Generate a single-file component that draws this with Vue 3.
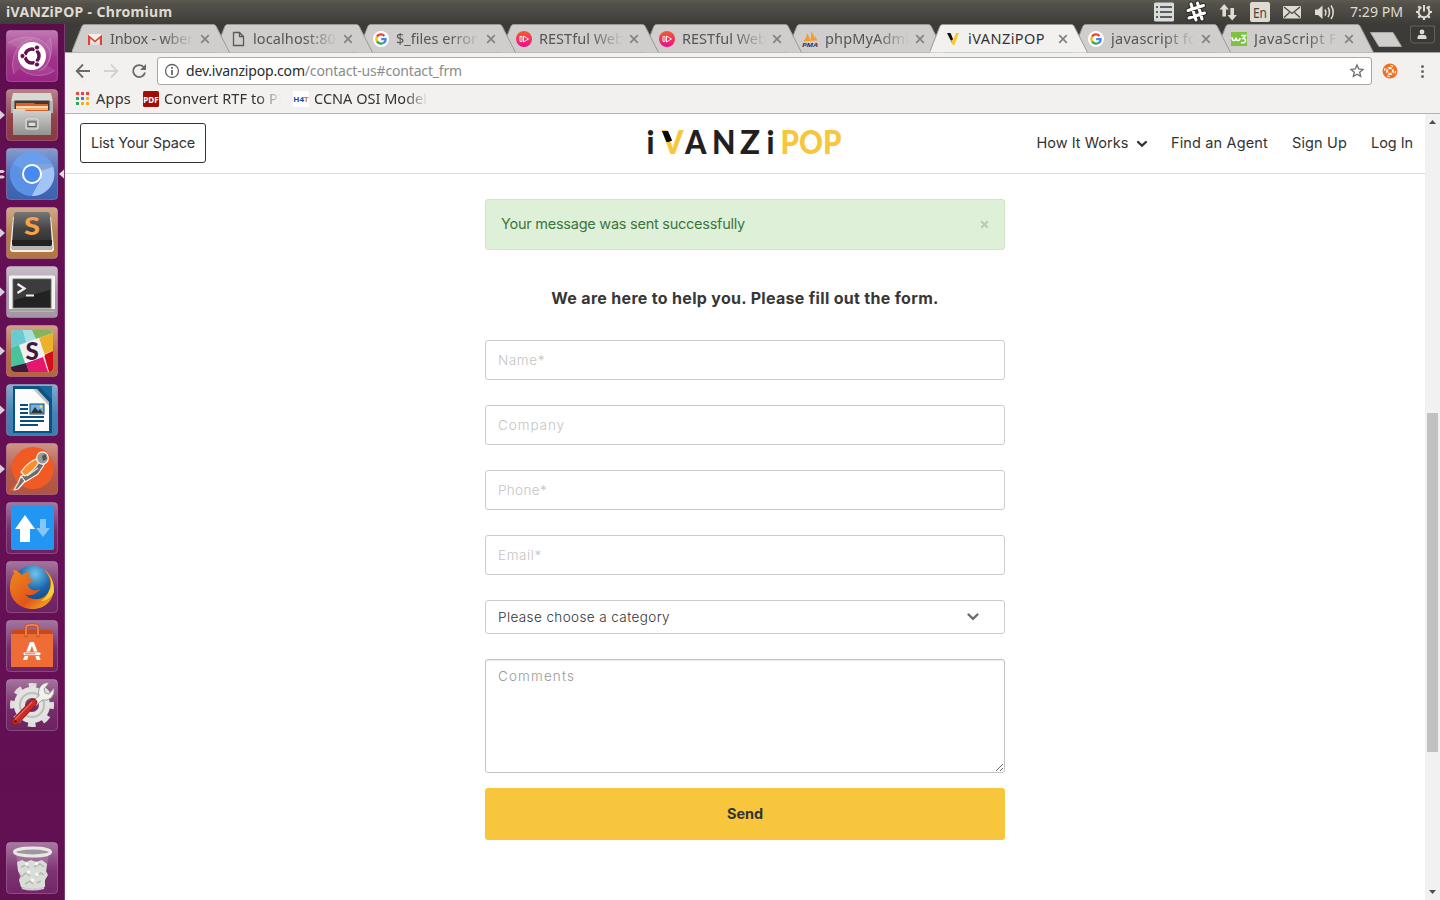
<script setup>
const tabs = [
  { icon: 'gmail', title: 'Inbox - wber', w: 83 },
  { icon: 'doc', title: 'localhost:80', w: 83 },
  { icon: 'google', title: '$_files error', w: 81 },
  { icon: 'play', title: 'RESTful Web', w: 85 },
  { icon: 'play', title: 'RESTful Web', w: 85 },
  { icon: 'pma', title: 'phpMyAdmi', w: 84 },
  { icon: 'v', title: 'iVANZiPOP', w: 77, active: true },
  { icon: 'google', title: 'javascript fo', w: 86 },
  { icon: 'w3', title: 'JavaScript F', w: 83 }
]
const apps = ['ubuntu', 'files', 'chromium', 'sublime', 'terminal', 'slack', 'writer', 'postman', 'transfer', 'firefox', 'software', 'settings', 'trash']
const running = ['files', 'sublime', 'terminal', 'slack', 'writer', 'postman']
const fields = [
  { label: 'Name*', w: 47 },
  { label: 'Company', w: 67 },
  { label: 'Phone*', w: 49 },
  { label: 'Email*', w: 44 }
]
const appGrid = ['#e8453c', '#e8453c', '#e8453c', '#34a05a', '#3d7de8', '#f6b01e', '#34a05a', '#f6b01e', '#f6b01e']

// Spreads a text run over a given width by adjusting its letter spacing.
const ctx = document.createElement('canvas').getContext('2d')
const vFit = {
  mounted(el, { value }) {
    const s = getComputedStyle(el)
    const text = (el.placeholder || el.textContent).trim()
    ctx.font = `${s.fontWeight} ${s.fontSize} ${s.fontFamily}`
    const gap = (value - ctx.measureText(text).width) / text.length
    el.style.letterSpacing = `${gap.toFixed(3)}px`
  }
}
</script>

<template>
  <div class="desktop">
    <header class="panel">
      <span v-fit="166.5" class="window-title">iVANZiPOP - Chromium</span>
      <svg class="tray" width="290" height="24" viewBox="1150 0 290 24">
        <g fill="#dfdbd2">
          <rect x="1154" y="2.500" width="20" height="19" rx="1.500" fill="#d9dcdc" />
          <g fill="#5b5f60"><rect x="1156" y="6" width="2" height="2" /><rect x="1160" y="6" width="12" height="2" /><rect x="1156" y="11" width="2" height="2" /><rect x="1160" y="11" width="12" height="2" /><rect x="1156" y="16" width="2" height="2" /><rect x="1160" y="16" width="12" height="2" /></g>
          <path d="M1191 4l5 16M1197.500 3l4.500 16M1188 10.500l15.500-5M1189 18l15.500-5" stroke="#2a2926" stroke-width="5" stroke-linecap="round" />
          <path d="M1191 4l5 16M1197.500 3l4.500 16M1188 10.500l15.500-5M1189 18l15.500-5" stroke="#fff" stroke-width="3" stroke-linecap="round" />
          <path d="M1219.500 9.500l4.700-5.500 4.700 5.500h-2.900v7h-3.600v-7zM1227.500 15l4.700 5.500 4.700-5.500h-2.900V8h-3.600v7z" />
          <rect x="1250" y="2" width="20" height="20" rx="2" />
          <rect x="1283" y="6" width="18" height="12.500" rx="1" />
          <path d="M1284 7l8 6.500 8-6.500M1284 17.500l5.500-5M1300 17.500l-5.500-5" fill="none" stroke="#4a4843" stroke-width="1.300" />
          <path d="M1315 9.500h3l4.500-4v13.500l-4.500-4h-3z" />
          <path d="M1325 9.500q1.800 3 0 6M1328 7.500q3 4.800 0 9.600M1331 5.500q4.500 6.800 0 13.500" fill="none" stroke="#dfdbd2" stroke-width="1.500" />
        </g>
        <text x="1253" y="17.500" class="lang" textLength="14" lengthAdjust="spacingAndGlyphs">En</text>
        <text x="1350" y="17" class="clock" textLength="53" lengthAdjust="spacingAndGlyphs">7:29 PM</text>
        <g stroke="#dfdbd2" fill="none" transform="translate(1424 12)">
          <path d="M-2.600-4.800A5.400 5.400 0 1 0 2.600-4.800" stroke-width="2" />
          <path d="M0-7v6.500" stroke-width="2" />
          <path d="M5.500 0H8M-5.500 0H-8M0 5.500V8M3.900 3.900l1.800 1.800M-3.900 3.900l-1.800 1.800M4.300-4.300l1.400-1.400M-4.300-4.300l-1.400-1.400" stroke-width="2.200" />
        </g>
      </svg>
    </header>

    <div class="workspace">
      <aside class="launcher">
        <div v-for="app in apps" :key="app" class="slot" :class="app">
          <svg class="app" width="65" height="52" viewBox="-6 0 65 52">
            <defs>
              <linearGradient id="sheen" x2="0" y2="1"><stop offset="0" stop-color="#fff" stop-opacity=".38" /><stop offset=".55" stop-color="#fff" stop-opacity=".06" /><stop offset="1" stop-color="#fff" stop-opacity="0" /></linearGradient>
              <linearGradient id="metal" x2="0" y2="1"><stop offset="0" stop-color="#d3d3d1" /><stop offset="1" stop-color="#92928f" /></linearGradient>
              <linearGradient id="dark" x2="0" y2="1"><stop offset="0" stop-color="#777" /><stop offset=".5" stop-color="#444" /><stop offset="1" stop-color="#2b2b2b" /></linearGradient>
              <linearGradient id="fox" x1="0" y1="0" x2="1" y2="1"><stop offset="0" stop-color="#f08a1c" /><stop offset=".6" stop-color="#e2551a" /><stop offset="1" stop-color="#f7c51e" /></linearGradient>
              <radialGradient id="globe" cx=".55" cy=".2" r=".8"><stop offset="0" stop-color="#6fc4ec" /><stop offset=".5" stop-color="#1b66ab" /><stop offset="1" stop-color="#123a74" /></radialGradient>
              <clipPath id="slackclip"><rect x="5" y="5" width="42" height="42" rx="4" /></clipPath>
            </defs>
            <path v-if="running.includes(app)" d="M-6 21.500l5 4.500-5 4.500z" fill="#d9cdd7" />
            <template v-if="app === 'chromium'">
              <path d="M-6 22h3l2 1.500-2 1.500h-3zM-6 27.500h3l2 1.500-2 1.500h-3z" fill="#d9cdd7" />
              <path d="M58 21.500l-5 4.500 5 4.500z" fill="#e4dce3" />
            </template>
            <rect class="tile" x=".5" y=".5" width="51" height="51" rx="3.500" />
            <rect x=".5" y=".5" width="51" height="51" rx="3.500" fill="url(#sheen)" />

            <g v-if="app === 'ubuntu'">
              <g fill="none" stroke="#dba9d0" stroke-width="1" opacity=".4">
                <path d="M2 13C18 3 37 7 42 17s1 19-9 24M8 44C3 27 12 11 26 9M49 40C39 48 22 47 14 38M44 8C48 21 43 35 36 40" />
              </g>
              <path d="M2 13C18 3 37 7 42 17L26 26zM8 44C3 27 12 15 20 12l6 14zM49 40C39 48 22 47 14 38l12-12zM44 8C48 21 43 35 36 40L26 26z" fill="#fff" opacity=".1" />
              <circle cx="26" cy="26" r="14" fill="#fff" />
              <circle cx="26" cy="26" r="7" fill="none" stroke="#621250" stroke-width="3.500" />
              <path d="M26 26H16M26 26l5.500-9M26 26l5.500 9" stroke="#fff" stroke-width="1.500" />
              <circle cx="26" cy="26" r="5" fill="#fff" />
              <g fill="#621250" stroke="#fff" stroke-width="1"><circle cx="16.500" cy="26" r="2.600" /><circle cx="31" cy="17.500" r="2.600" /><circle cx="31" cy="34.500" r="2.600" /></g>
            </g>
            <g v-else-if="app === 'files'">
              <path d="M7 4h38l2 9v6H5v-6z" fill="#d8d8d6" />
              <path d="M5 12h42v12H5z" fill="#b5b5b3" />
              <path d="M8.500 11.500h35v10h-35z" fill="#4b3528" />
              <path d="M10 14h18l1 1h13v7H10z" fill="#d6642a" /><path d="M10 17h32v4H10z" fill="#f5b06c" /><path d="M10 17.500h32v1H10z" fill="#fff" />
              <path d="M7 20h11l2 2h25v24H7z" fill="url(#metal)" />
              <rect x="20" y="30" width="12" height="10" rx="2" fill="#aaa" stroke="#e1e1e1" stroke-width="1.200" /><rect x="22" y="33" width="8" height="4.500" fill="#ddd" stroke="#555" />
            </g>
            <g v-else-if="app === 'chromium'">
              <circle cx="26" cy="26" r="22" fill="#5d92e5" />
              <path d="M26 26L6.500 16A22 22 0 0 1 46 16z" fill="#6a9eea" /><path d="M26 16h20a22 22 0 0 1-20.500 32L35 31z" fill="#a2c3f6" />
              <path d="M7 15l10 17 8 3 8-1-7.500 14A22 22 0 0 1 7 15z" fill="#5b91e4" /><path d="M26 16h20l1 3-13 4z" fill="#315b9e" opacity=".3" />
              <circle cx="26" cy="26" r="10" fill="#fff" /><circle cx="26" cy="26" r="8" fill="#478af0" />
            </g>
            <g v-else-if="app === 'sublime'">
              <path d="M7 10L4 42q0 3 3 3h38q3 0 3-3L45 10z" fill="#f1f1ef" /><path d="M5 39h42l-1 4H6z" fill="#b9b6b0" />
              <path d="M11 5h30q3 0 3 3l2 29q0 2-2 2H8q-2 0-2-2L8 8q0-3 3-3z" fill="url(#dark)" />
              <path d="M6 33h40v4q0 2-2 2H8q-2 0-2-2z" fill="#222" />
              <text x="18" y="28" class="sub-s" textLength="16" lengthAdjust="spacingAndGlyphs">S</text>
            </g>
            <g v-else-if="app === 'terminal'">
              <rect x="3" y="9.500" width="46" height="36" rx="1.500" fill="#f3f3f1" /><path d="M3 43h46v2.500H3z" fill="#a3a09f" />
              <rect x="7" y="13" width="38" height="29" fill="#222" stroke="#777" /><path d="M8 14h36v10L8 34z" fill="#fff" opacity=".12" />
              <path d="M11.500 18l7 4.500-7 4.500" fill="none" stroke="#eee" stroke-width="2.300" /><path d="M20 29.500h8" stroke="#eee" stroke-width="2" />
            </g>
            <g v-else-if="app === 'slack'" clip-path="url(#slackclip)">
              <path d="M5 5h42v42H5z" fill="#f3eff2" />
              <path d="M5 5h12l4 13-16 5z" fill="#69cbd0" /><path d="M17 5h13l2 8-12 5z" fill="#a8e1e3" /><path d="M26 5h21v3l-17 6z" fill="#84b55c" />
              <path d="M33 13l14-5v18l-9 3z" fill="#ecb12d" /><path d="M5 23l8-3 6 18-14 5z" fill="#49c39c" /><path d="M20 38l17-6 5 15H23z" fill="#e6176f" />
              <path d="M38 30l9-4v21h-4z" fill="#d60d1c" /><path d="M5 42l15-4 3 9H5z" fill="#40193f" />
              <path d="M13 20l20-7 6 18-19 7z" fill="#f3eff2" />
              <text x="26" y="34.500" text-anchor="middle" class="slack-s">S</text>
            </g>
            <g v-else-if="app === 'writer'">
              <path d="M7 2h28l11 12v35H7z" fill="#075383" /><path d="M9 5h20l14 14v28H9z" fill="#fcfcfa" /><path d="M27 5h4l12 13v4z" fill="#c2c2c2" /><path d="M33 2h13v14z" fill="#18689a" />
              <path d="M14 21h8M14 25h8M14 29h8M14 33h24M14 37h24M14 41h18" stroke="#0b4d7c" stroke-width="2" />
              <rect x="24" y="20" width="14" height="10" fill="#6db4e8" stroke="#16496c" /><path d="M25 29l4-6 3 4 2-2 3 4z" fill="#333" /><circle cx="35" cy="22.500" r="1.500" fill="#f4d253" />
            </g>
            <g v-else-if="app === 'postman'">
              <circle cx="27" cy="25" r="21" fill="#f15a24" /><path d="M3 48l10-11 5 6z" fill="#f15a24" />
              <g stroke="#f7f5f2" stroke-width="1.200" stroke-linejoin="round">
                <path d="M33 17l5 5-6 9-13 8-4-5z" fill="#6e6a68" />
                <path d="M15 29q6-9 15-13l3 3q-5 9-14 14z" fill="#f7902b" />
                <path d="M15 33l4 5-7 8-4 1 4-7z" fill="#77706d" />
                <ellipse cx="36.500" cy="15" rx="5.800" ry="6.200" fill="#9b9895" />
              </g>
              <path d="M36 13l3.500-2 1.500 5-4 2z" fill="#54504e" /><path d="M21 33l11-8" stroke="#e9e6e3" stroke-width="1.200" />
            </g>
            <g v-else-if="app === 'transfer'">
              <rect x="5" y="4" width="43" height="44" rx="2" fill="#2196f3" /><path d="M9 27l10-14 10 14h-5v13H14V27z" fill="#fff" /><path d="M34 17h6v9h4l-7 9-7-9h4z" fill="#86c5f8" />
            </g>
            <g v-else-if="app === 'firefox'">
              <circle cx="27" cy="25" r="20.500" fill="url(#globe)" />
              <path d="M7 9c4 0 6 2 9 5 2-2 5-3 8-3-1 2-2 4-1 6 2 1 4 1 4 2 0 2-5 3-5 5 1 5 7 7 12 4-3 5-10 8-15 5 4 6 14 7 20 2 5-4 6-10 5-15-1-6-5-10-7-12 7 4 11 11 11 19 0 12-9 21-21 21C13 48 4 38 4 27 4 20 6 15 8 13z" fill="url(#fox)" />
              <path d="M38 8c7 7 9 15 5 22-2 5-5 8-8 10 5 0 10-3 13-9 0-10-3-17-10-23z" fill="#fbdc37" opacity=".85" />
            </g>
            <g v-else-if="app === 'software'">
              <path d="M5 16l2-6h38l2 6z" fill="#c84b17" /><rect x="5" y="14" width="42" height="33" fill="#ee6c35" />
              <path d="M20 17V8q0-3 3-3h6q3 0 3 3v9" fill="none" stroke="#c94c1b" stroke-width="3" /><path d="M20 16V8q0-3 3-3h6q3 0 3 3v8" fill="none" stroke="#f48a59" stroke-width="1.500" />
              <text x="26" y="40" text-anchor="middle" class="soft-a">A</text>
              <rect x="17" y="32" width="18" height="3.500" rx="1.700" fill="#fff" stroke="#e86933" stroke-width=".8" /><path d="M19 33.800h10" stroke="#e86933" />
            </g>
            <g v-else-if="app === 'settings'">
              <circle cx="26" cy="26" r="19" fill="none" stroke="#dededc" stroke-width="6" stroke-dasharray="7.500 7.423" stroke-dashoffset="3.750" />
              <circle cx="26" cy="26" r="12.500" fill="none" stroke="#e3e3e1" stroke-width="11" /><circle cx="26" cy="26" r="12" fill="none" stroke="#bdbdbb" stroke-width="2" />
              <path d="M26 22l7-5q-2-8 4-12 3-2 6-1l-5 6 1 4 4 1 5-6q1 6-3 10-4 3-9 2l-6 6z" fill="#f0f0ee" stroke="#8c8c8a" stroke-width=".8" />
              <path d="M9.500 42.500L27.500 23.500" stroke="#8e1714" stroke-width="7.500" stroke-linecap="round" /><path d="M9.500 42.500L27.500 23.500" stroke="#c92c28" stroke-width="5.800" stroke-linecap="round" /><path d="M9 40.500L26 23" stroke="#e8635c" stroke-width="1.300" /><circle cx="9.500" cy="42.500" r="1.500" fill="#6e1512" />
            </g>
            <g v-else>
              <path d="M10 11h33l-5 35q-12 4-23 0z" fill="#b495ac" opacity=".45" />
              <path d="M11 20l5-2 4 2 5-2 5 2 6-2 5 4-1 7 2 4-3 5v7q-12 4-24 0l-2-7 2-4-3-5z" fill="#d9dcd7" />
              <path d="M15 25l5-2 3 3M28 25l6-3 4 3M15 35l5-4 4 3M30 35l5-4 3 2M19 42l5-3 3 3M31 41l4-2" fill="none" stroke="#b3b9b1" stroke-width="1.500" /><path d="M19 21l3 2M30 31l2 3M24 29l-3 2M29 21l3 1M25 37l3 2" stroke="#f6f7f5" stroke-width="3" />
              <ellipse cx="26.500" cy="10" rx="18" ry="4" fill="#a096a0" stroke="#e8e9e6" stroke-width="3" /><path d="M16 46q10 3 22 0" stroke="#d0cbd0" fill="none" stroke-width="2" />
            </g>
            <rect x=".5" y=".5" width="51" height="51" rx="3.500" fill="none" stroke="#fff" stroke-opacity=".22" />
          </svg>
        </div>
      </aside>

      <section class="browser">
        <div class="tabstrip">
          <div v-for="(tab, i) in tabs" :key="i" class="tab" :class="{ active: tab.active }" :style="{ zIndex: tab.active ? 20 : 10 - i }">
            <svg class="tab-shape" width="158" height="29" viewBox="0 0 158 29">
              <path d="M-.5 28.500L10 2Q11 .5 12.500.5H141.500Q143 .5 144 2L157.500 28.500" />
            </svg>
            <svg class="favicon" width="16" height="16" viewBox="0 0 16 16">
              <g v-if="tab.icon === 'gmail'"><path d="M1 3h14v11H1z" fill="#f2f0ee" /><path d="M3 14l5-6 5 6z" fill="#dedede" /><path d="M1 14V3.500l7 6 7-6V14h-2.200V7.500L8 11.500l-4.800-4V14z" fill="#d9453a" /></g>
              <path v-else-if="tab.icon === 'doc'" d="M3.500 1.500h6l4 4v9h-10zM9.500 1.500v4h4" fill="none" stroke="#5a5a5a" stroke-width="1.300" />
              <g v-else-if="tab.icon === 'google'" fill="none" stroke-width="2.300"><circle cx="8" cy="8" r="8" fill="#fff" /><path d="M4 5.600A4.600 4.600 0 0 1 11.400 4.900" stroke="#ea4335" /><path d="M4 5.600a4.600 4.600 0 0 0 0 4.800" stroke="#fbbc05" /><path d="M4 10.400a4.600 4.600 0 0 0 7 1.100" stroke="#34a853" /><path d="M11 11.800A4.600 4.600 0 0 0 12.600 8.200H8.200" stroke="#4285f4" /></g>
              <g v-else-if="tab.icon === 'play'"><circle cx="8" cy="8" r="8" fill="url(#pinkplay)" /><path d="M4 5.500h2v5H4zM7.500 5l5 3-5 3z" fill="none" stroke="#fff" stroke-width=".9" /><defs><linearGradient id="pinkplay" x2="0" y2="1"><stop stop-color="#f45c2c" /><stop offset="1" stop-color="#ea0d8c" /></linearGradient></defs></g>
              <g v-else-if="tab.icon === 'pma'"><path d="M1 10.500Q5 7 5 2q3 4 3 8zM8 10Q10 5 9 0q4 5 4 9.500zM13 9.500V5q2 3 2 4.500z" fill="#f79a2c" /><text x="0" y="15.500" class="pma" textLength="16" lengthAdjust="spacingAndGlyphs">PMA</text></g>
              <g v-else-if="tab.icon === 'v'"><path d="M2 2h3.500L8.500 9 7 12z" fill="#111" /><path d="M11 2h3L9.500 14H7.700L6 9.500 8.500 8z" fill="#f9c92e" /></g>
              <g v-else><rect y="1" width="16" height="14" fill="#7fc241" /><path d="M1 6q0 3.500 2 3.500T5 6.500q0 3 2 3t2-2.500M10 4.500h4.500l-2.500 3q3 0 2.500 2.500-.5 2.500-4.500 1.500" fill="none" stroke="#fff" stroke-width="1.400" /></g>
            </svg>
            <span class="tab-title"><span v-fit="tab.w">{{ tab.title }}</span></span>
            <svg class="close" width="10" height="10" viewBox="0 0 10 10"><path d="M1.200 1.200l7.600 7.600M8.800 1.200L1.200 8.800" /></svg>
          </div>
          <svg class="strip-end" width="74" height="28" viewBox="1366 24 74 28">
            <path d="M1370.500 32.500h22.500l8.500 14h-22.500z" fill="#d0cecc" stroke="#aaa8a5" />
            <path d="M1410.500 26v14q0 3 3 3h18q3 0 3-3V26z" fill="#3a3935" stroke="#65635e" />
            <circle cx="1422" cy="32" r="2.400" fill="#dedbd6" /><path d="M1417.500 39v-2q0-2 2.500-2h4q2.500 0 2.500 2v2z" fill="#dedbd6" />
          </svg>
        </div>

        <div class="toolbar">
          <svg class="nav-icons" width="92" height="32" viewBox="65 55 92 32" fill="none" stroke-width="1.800">
            <path d="M90 71H77M83 64.500L76.700 71l6.300 6.500" stroke="#6a6a6a" /><path d="M104 71h13M111 64.500l6.300 6.500-6.300 6.500" stroke="#d3d2d1" />
            <path d="M144 67.500A6 6 0 1 0 145 72.500" stroke="#6a6a6a" /><path d="M146 64v6h-6z" fill="#6a6a6a" />
          </svg>
          <div class="omnibox">
            <svg width="16" height="16" viewBox="0 0 16 16" fill="none" stroke="#666" stroke-width="1.300"><circle cx="8" cy="8" r="6.500" /><path d="M8 7v5M8 4v1.700" stroke-width="1.800" /></svg>
            <span v-fit="276" class="url">dev.ivanzipop.com<span class="path">/contact-us#contact_frm</span></span>
            <svg class="star" width="16" height="16" viewBox="0 0 16 16"><path d="M8 2l1.700 4 4.300.4-3.300 2.900 1 4.200L8 11.300l-3.700 2.200 1-4.200L2 6.400 6.300 6z" fill="none" stroke="#6c6c6c" stroke-width="1.300" /></svg>
          </div>
          <svg class="extras" width="68" height="32" viewBox="1372 55 68 32">
            <circle cx="1390" cy="71" r="7.500" fill="#f56f20" /><circle cx="1390" cy="71" r="3" fill="none" stroke="#fff" stroke-width="1.800" /><circle cx="1390" cy="71" r="5.500" fill="none" stroke="#fff" stroke-width="1.100" stroke-dasharray="2.600 6.040" /><path d="M1387 68l1.500 1.500M1393 68l-1.500 1.500M1387 74l1.500-1.500M1393 74l-1.500-1.500" stroke="#f56f20" stroke-width="1.500" />
            <g fill="#6a6a6a"><circle cx="1422.500" cy="66.500" r="1.500" /><circle cx="1422.500" cy="71.500" r="1.500" /><circle cx="1422.500" cy="76.500" r="1.500" /></g>
          </svg>
        </div>

        <div class="bookmarks">
          <svg width="13" height="13" viewBox="0 0 13 13"><rect v-for="(c, i) in appGrid" :key="i" :x="(i % 3) * 5" :y="Math.floor(i / 3) * 5" width="3" height="3" :fill="c" /></svg>
          <span v-fit="35" class="bm-apps">Apps</span>
          <svg width="16" height="16" viewBox="0 0 16 16"><rect width="16" height="16" rx="1.500" fill="#a30b07" /><text x=".3" y="11.800" class="pdf" textLength="15.400" lengthAdjust="spacingAndGlyphs">PDF</text></svg>
          <span class="bm-faded rtf"><span v-fit="119">Convert RTF to PI</span></span>
          <svg width="16" height="16" viewBox="0 0 16 16"><rect width="16" height="16" fill="#fff" /><text x=".3" y="11" class="h4t" textLength="15.400" lengthAdjust="spacingAndGlyphs">H4<tspan fill="#f0762b">T</tspan></text></svg>
          <span class="bm-faded ccna"><span v-fit="113">CCNA OSI Model</span></span>
        </div>

        <div class="viewport">
          <main class="page">
            <nav class="site-nav">
              <button class="list-space"><span v-fit="104">List Your Space</span></button>
              <svg class="logo" width="196" height="30" viewBox="646 128 196 30">
                <g fill="#231f20">
                  <text x="646.500" y="153.500" textLength="8" lengthAdjust="spacingAndGlyphs">i</text>
                  <text x="662" y="153.500" textLength="21.500" lengthAdjust="spacingAndGlyphs" fill="#f8c63c">V</text>
                  <text x="685" y="153.500" textLength="21.500" lengthAdjust="spacingAndGlyphs">A</text>
                  <text x="712" y="153.500" textLength="23.500" lengthAdjust="spacingAndGlyphs">N</text>
                  <text x="740" y="153.500" textLength="20" lengthAdjust="spacingAndGlyphs">Z</text>
                  <text x="766.500" y="153.500" textLength="8" lengthAdjust="spacingAndGlyphs">i</text>
                </g>
                <path d="M662 131h6l4.200 9.500-3.600 1.500h-2.200z" fill="#090909" />
                <text x="780.500" y="153.500" textLength="61" lengthAdjust="spacingAndGlyphs" fill="#f8c63c">POP</text>
              </svg>
              <div class="links">
                <a class="how"><span v-fit="92">How It Works</span><svg width="12" height="8" viewBox="0 0 12 8"><path d="M2 2l4 3.700L10 2" /></svg></a>
                <a><span v-fit="97">Find an Agent</span></a>
                <a><span v-fit="55">Sign Up</span></a>
                <a><span v-fit="42">Log In</span></a>
              </div>
            </nav>

            <div class="form">
              <div class="alert">
                <span v-fit="244">Your message was sent successfully</span>
                <svg width="9" height="9" viewBox="0 0 9 9"><path d="M1.200 1.200l6.600 6.600M7.800 1.200L1.200 7.800" /></svg>
              </div>
              <h1><span v-fit="388">We are here to help you. Please fill out the form.</span></h1>
              <input v-for="f in fields" :key="f.label" v-fit="f.w" type="text" :placeholder="f.label">
              <div class="select"><span v-fit="172">Please choose a category</span><svg width="14" height="10" viewBox="0 0 14 10"><path d="M2.500 2.500L7 6.800l4.500-4.300" /></svg></div>
              <textarea v-fit="77" placeholder="Comments"></textarea>
              <button class="send"><span v-fit="36">Send</span></button>
            </div>
          </main>
          <div class="scrollbar">
            <svg width="15" height="16" viewBox="0 0 15 16"><path d="M4 10l3.500-4 3.500 4z" /></svg>
            <div class="thumb"></div>
            <svg width="15" height="16" viewBox="0 0 15 16"><path d="M4 6l3.500 4L11 6z" /></svg>
          </div>
        </div>
      </section>
    </div>
  </div>
</template>

<style>
body { margin: 0; overflow: hidden; }
</style>

<style scoped>
* { box-sizing: border-box; }
svg { display: block; flex: none; }
.desktop { width: 1440px; height: 900px; display: flex; flex-direction: column; overflow: hidden; font-family: "Noto Sans", "Open Sans", sans-serif; }
.panel { height: 24px; flex: none; display: flex; justify-content: space-between; align-items: center; padding-left: 6px; background: linear-gradient(#5d5b50, #54524a 15%, #3d3c38); color: #dfdbd2; }
.window-title { font-size: 14px; font-weight: 700; line-height: 24px; white-space: nowrap; }
.lang { font: 15px "Noto Sans", sans-serif; fill: #45433f; }
.clock { font: 14.500px "Noto Sans", sans-serif; fill: #dfdbd2; }
.workspace { flex: 1; display: flex; min-height: 0; }

.launcher { width: 65px; flex: none; display: flex; flex-direction: column; gap: 7px; padding: 6px 0; background: linear-gradient(#5b0d4b, #650f55 20%, #650f55 75%, #5f104f); border-right: 1px solid #7e3b72; }
.slot { height: 52px; flex: none; }
.slot.trash { margin-top: auto; }
.tile { fill: #7d3a70; }
.ubuntu .tile { fill: #9b2684; }
.files .tile { fill: #8b3841; }
.chromium .tile { fill: #3c62b0; }
.sublime .tile { fill: #b27540; }
.terminal .tile { fill: #a596a6; }
.slack .tile { fill: #b5643e; }
.writer .tile { fill: #3a7cb0; }
.postman .tile { fill: #af5440; }
.transfer .tile, .firefox .tile, .software .tile, .settings .tile { fill: #6d2161; }
.trash .tile { fill: #74276a; }
.sub-s { font: 900 24px Lato, sans-serif; fill: #f9a245; }
.slack-s { font: 900 24px Lato, sans-serif; fill: #3c1a3e; }
.soft-a { font: 900 24px Lato, sans-serif; fill: #fff; }

.browser { flex: 1; min-width: 0; display: flex; flex-direction: column; background: #f2f1f0; }
.tabstrip { height: 29px; flex: none; display: flex; padding-left: 7px; background: #3c3b37; position: relative; isolation: isolate; box-shadow: inset 0 -1px #a5a4a2; }
.tab { position: relative; width: 157px; height: 29px; flex: none; margin-right: -14px; padding-left: 15px; display: flex; align-items: center; }
.tab-shape { position: absolute; left: 0; top: 0; }
.tab-shape path { fill: #d0cecc; stroke: #9c9a97; stroke-width: 1; }
.active .tab-shape path { fill: #f2f1f0; }
.favicon, .tab-title, .close { position: relative; }
.tab-title { width: 84px; margin-left: 7px; height: 28px; line-height: 27px; overflow: hidden; white-space: nowrap; font-size: 14.500px; color: #555; -webkit-mask-image: linear-gradient(90deg, #000 62%, transparent); mask-image: linear-gradient(90deg, #000 62%, transparent); }
.active .tab-title { color: #333; -webkit-mask-image: none; mask-image: none; }
.close { margin-left: 6px; }
.close path { stroke: #858381; stroke-width: 1.700; fill: none; }
.strip-end { margin-left: auto; }

.toolbar { height: 36px; flex: none; display: flex; align-items: center; }
.omnibox { flex: 1; height: 28px; display: flex; align-items: center; padding: 0 6px; background: #fff; border: 1px solid #aaa8a6; border-radius: 3px; }
.url { margin-left: 6px; font-size: 14px; line-height: 26px; color: #2a2a2a; white-space: nowrap; }
.path { color: #8b8b8b; }
.star { margin-left: auto; }
.bookmarks { height: 25px; flex: none; display: flex; align-items: center; padding: 0 0 4px 11px; border-bottom: 1px solid #b6b4b2; font-size: 14.500px; color: #333; white-space: nowrap; }
.bookmarks > svg { position: relative; top: -.500px; }
.bookmarks > span { line-height: 20px; margin-top: -2px; }
.bm-apps { width: 47px; margin-left: 7px; }
.bm-faded { overflow: hidden; margin-left: 5px; -webkit-mask-image: linear-gradient(90deg, #000 80%, transparent); mask-image: linear-gradient(90deg, #000 80%, transparent); }
.rtf { width: 117px; margin-right: 12px; }
.ccna { width: 114px; }
.pdf { font: 700 9px "Noto Sans", sans-serif; fill: #fff; }
.h4t { font: 700 7.500px "Noto Sans", sans-serif; fill: #244e9c; }
.pma { font: italic 700 6px "Noto Sans", sans-serif; fill: #34346b; }

.viewport { flex: 1; min-height: 0; display: flex; background: #fff; }
.page { flex: 1; font-family: Inter, sans-serif; color: #333; }
.site-nav { height: 60px; display: grid; grid-template-columns: 1fr 196px 1fr; align-items: center; padding: 0 12px 1px 15px; border-bottom: 1px solid #dedede; }
.list-space { width: 126px; height: 40px; border: 1px solid #333; border-radius: 3px; background: #fff; color: #333; font: 14.500px Inter, sans-serif; padding: 0 0 2px; white-space: nowrap; }
.logo { margin-left: -2.500px; overflow: visible; }
.logo text { font: 900 31.500px Lato, sans-serif; }
.links { display: flex; justify-content: flex-end; gap: 24px; font-size: 14.500px; margin-top: -2px; white-space: nowrap; }
.how { display: flex; align-items: center; gap: 8px; margin-right: -1.500px; }
.how svg { margin-top: 4px; }
.how path { fill: none; stroke: #333; stroke-width: 2.300; stroke-linecap: round; }
.form { width: 520px; margin: 25px auto 0; display: flex; flex-direction: column; }
.alert { height: 51px; display: flex; align-items: center; justify-content: space-between; padding: 0 15px; border: 1px solid #d0e6c0; border-radius: 3px; background: #dff0d8; color: #3c763d; font-size: 14.500px; }
.alert span { margin-top: -2px; }
.alert path { stroke: #b5cfb0; stroke-width: 2.300; }
h1 { margin: 38px 0 0; height: 20px; line-height: 20px; font-size: 16px; font-weight: 700; text-align: center; color: #373737; white-space: nowrap; }
input { display: block; height: 40px; margin: 0 0 25px; padding: 0 12px; border: 1px solid #ccc; border-radius: 3px; font: 300 13.500px Inter, sans-serif; outline: none; }
h1 + input { margin-top: 32px; }
input::placeholder { color: #c4c4c4; opacity: 1; }
.select { height: 34px; display: flex; justify-content: space-between; align-items: center; padding: 0 24px 0 12px; border: 1px solid #ccc; border-radius: 3px; font-size: 13.500px; font-weight: 300; color: #333; }
.select path { fill: none; stroke: #6c6c6c; stroke-width: 2.400; stroke-linecap: round; }
textarea { display: block; height: 114px; margin: 25px 0 15px; padding: 8px 12px; border: 1px solid #c4c4c4; border-radius: 3px; box-shadow: inset 0 1px 1px rgba(0, 0, 0, .08); font: 300 13.500px/17px Inter, sans-serif; resize: vertical; outline: none; }
textarea::placeholder { color: #999; opacity: 1; }
.send { height: 52px; padding: 0 0 2px; border: 0; border-radius: 3px; background: #f8c63c; color: #333; font: 700 14.500px Inter, sans-serif; }
.scrollbar { width: 15px; display: flex; flex-direction: column; background: #f1f1f1; }
.scrollbar path { fill: #505050; }
.thumb { width: 11px; height: 339px; margin: 283px 2px auto; background: #c1c1c1; }
</style>
